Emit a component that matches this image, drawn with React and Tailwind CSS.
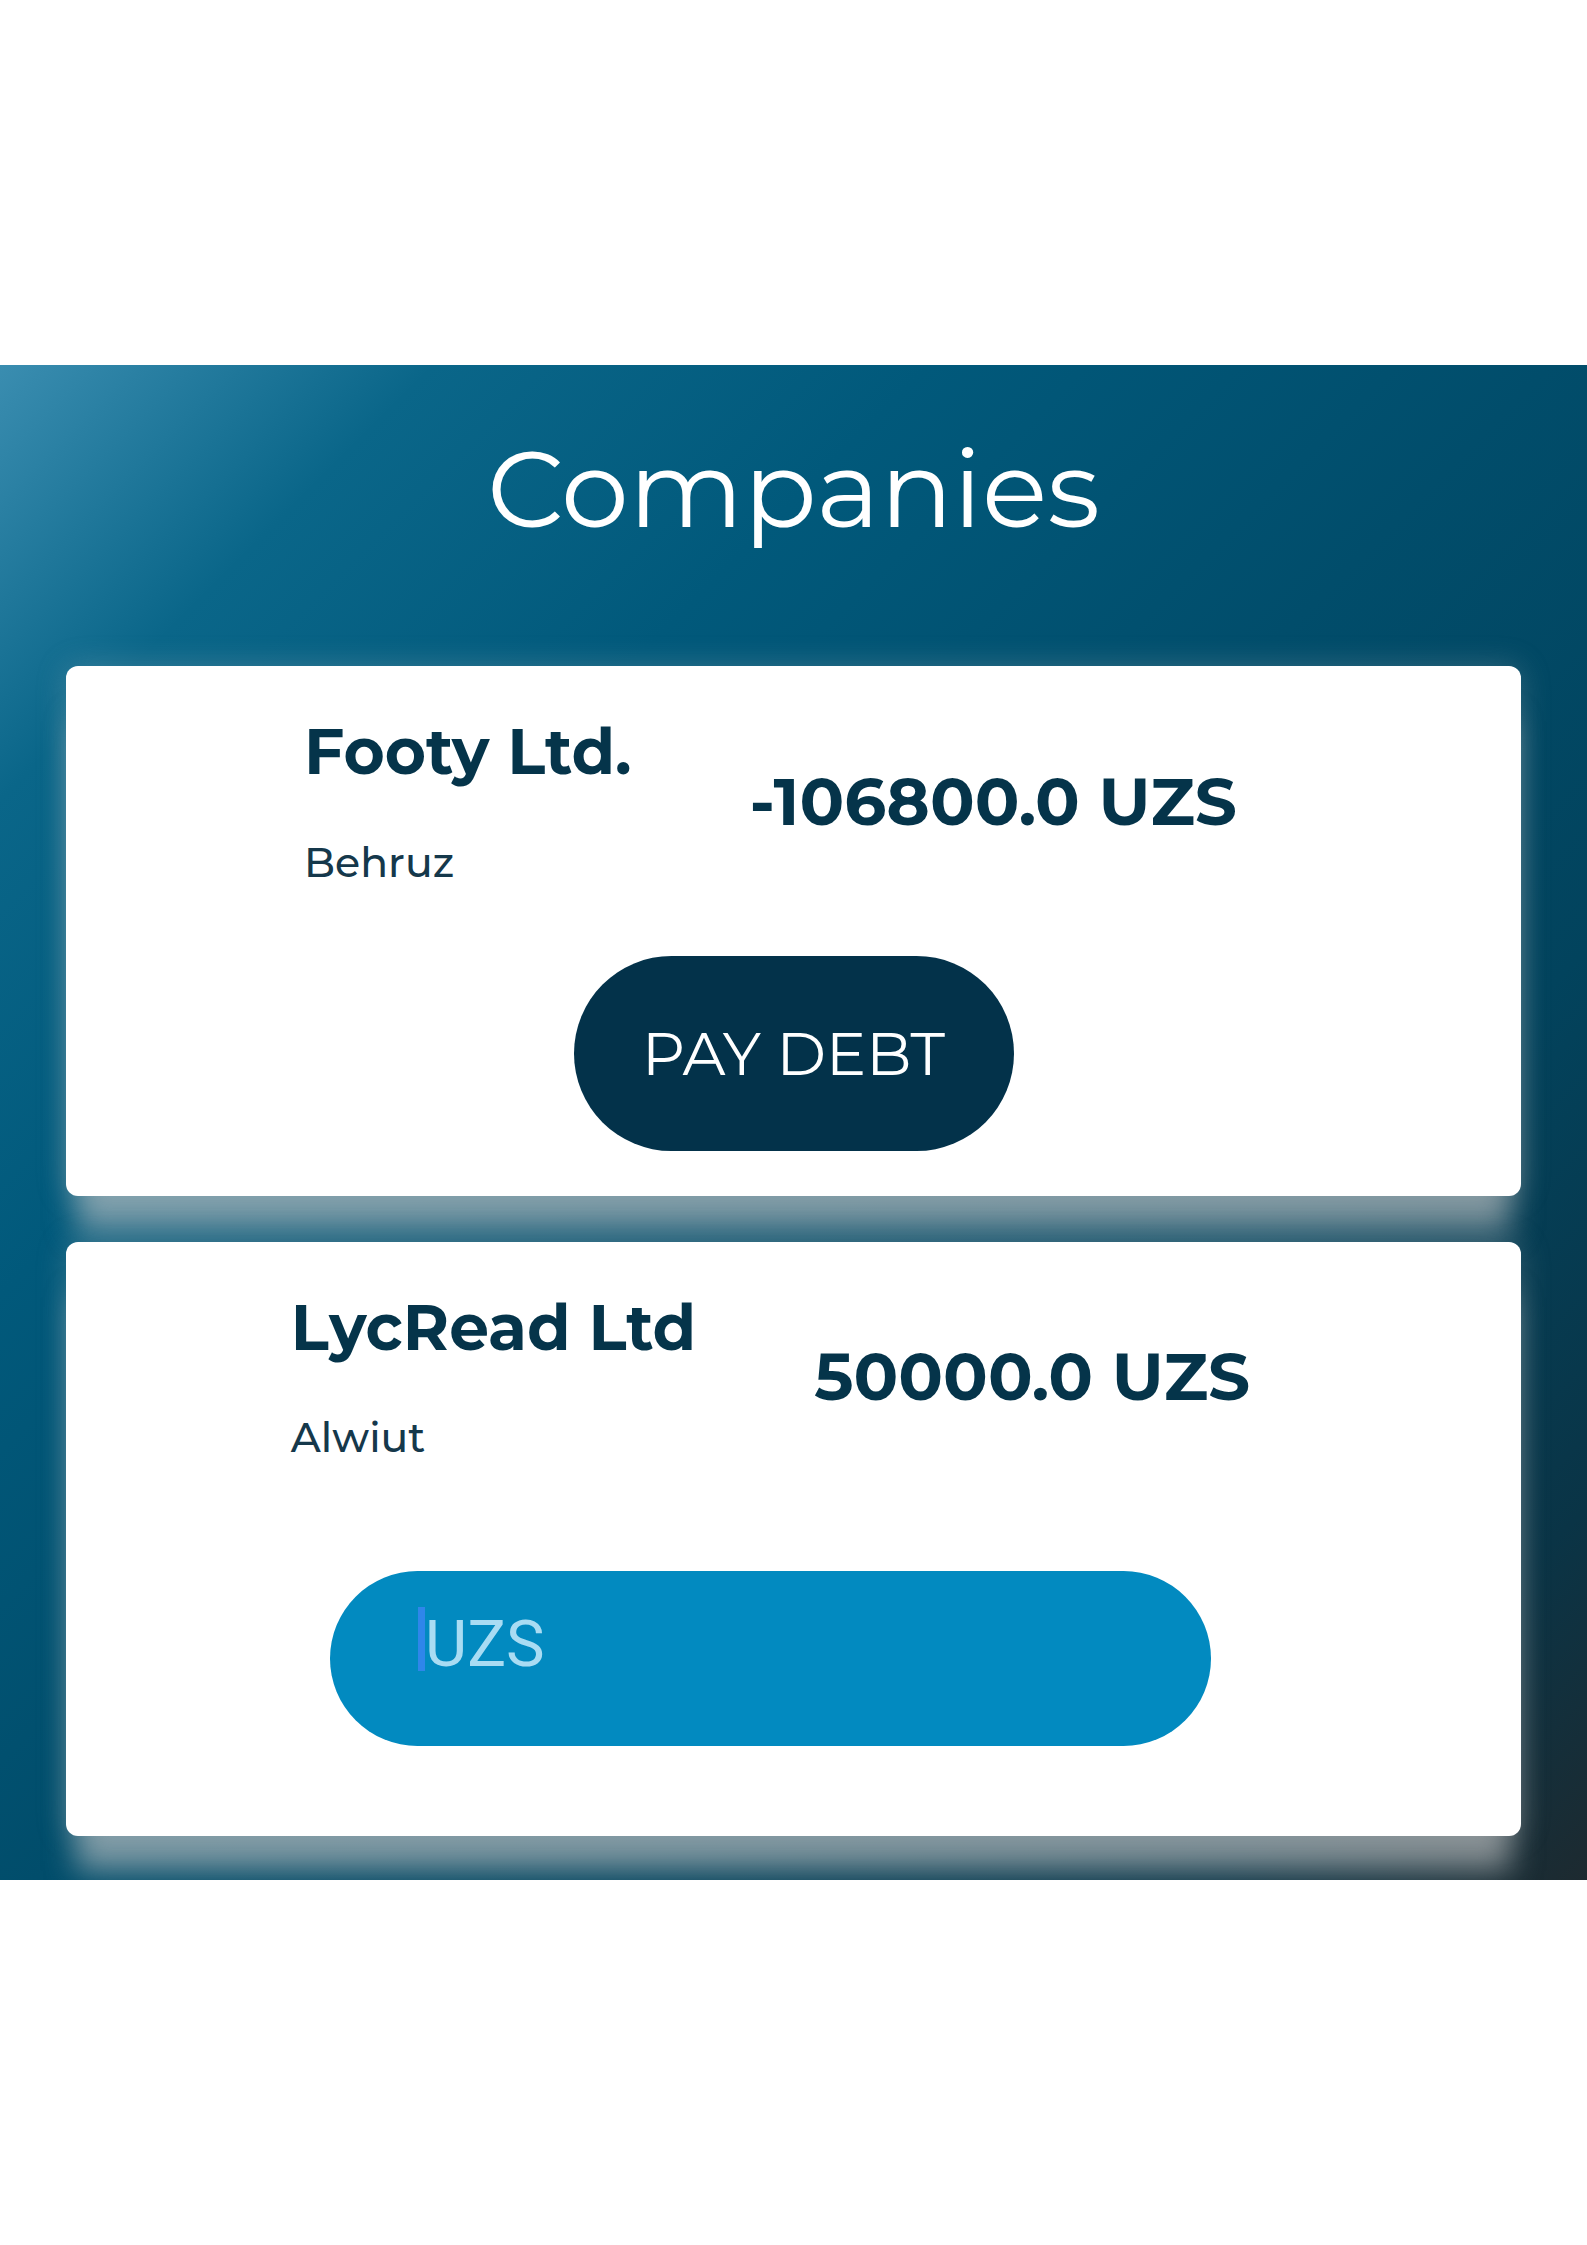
export default function App() {
  const font = { fontFamily: "Montserrat, Inter, 'Noto Sans', sans-serif" };
  return (
    <div className="min-h-[2245px] w-full bg-white" style={font}>
      <div className="h-[365px]" />
      <div className="relative overflow-hidden bg-[linear-gradient(135deg,#3a8db0_0%,#0a6689_14%,#01597b_30%,#014d6b_50%,#02435d_70%,#0a3446_88%,#1d2a30_100%)] pb-[44px]">
        <h1 className="pt-[69px] text-center text-[108px] leading-none font-normal text-white">
          Companies
        </h1>
        <div className="mt-[124px] flex flex-col gap-[46px] px-[66px]">
          {/* Card 1 */}
          <div className="rounded-[12px] bg-white pt-[54px] pb-[45px] shadow-[0_45px_30px_-10px_rgba(200,200,200,0.6),0_0_30px_rgba(200,200,200,0.25)]">
            <div className="flex items-center justify-center gap-[118px] pr-[46px]">
              <div className="flex flex-col">
                <div className="text-[63px] leading-none font-bold text-[#05344a]">Footy Ltd.</div>
                <div className="mt-[59px] text-[41px] leading-none font-medium text-[#15384b]">Behruz</div>
              </div>
              <div className="text-[66px] leading-none font-bold text-[#05344a]">-106800.0 UZS</div>
            </div>
            <div className="mt-[73px] flex justify-center">
              <button className="flex h-[195px] w-[440px] items-center justify-center rounded-full bg-[#03324a] text-[60px] leading-none text-white">
                PAY DEBT
              </button>
            </div>
          </div>
          {/* Card 2 */}
          <div className="rounded-[12px] bg-white pt-[54px] pb-[90px] shadow-[0_45px_30px_-10px_rgba(200,200,200,0.6),0_0_30px_rgba(200,200,200,0.25)]">
            <div className="flex items-center justify-center gap-[118px] pr-[46px]">
              <div className="flex flex-col">
                <div className="text-[63px] leading-none font-bold text-[#05344a]">LycRead Ltd</div>
                <div className="mt-[58px] text-[41px] leading-none font-medium text-[#15384b]">Alwiut</div>
              </div>
              <div className="text-[66px] leading-none font-bold text-[#05344a]">50000.0 UZS</div>
            </div>
            <div className="mt-[113px] flex justify-center pr-[46px]">
              <div className="flex h-[175px] w-[881px] items-start rounded-full bg-[#028ac0] pt-[36px] pl-[88px]">
                <span className="h-[64px] w-[7px] bg-[#2f86ea]" />
                <span
                  className="mt-[5px] text-[65px] leading-none text-[#a9dcf3]"
                  style={{ fontFamily: "Roboto, 'Noto Sans', sans-serif" }}
                >
                  UZS
                </span>
              </div>
            </div>
          </div>
        </div>
      </div>
    </div>
  );
}
